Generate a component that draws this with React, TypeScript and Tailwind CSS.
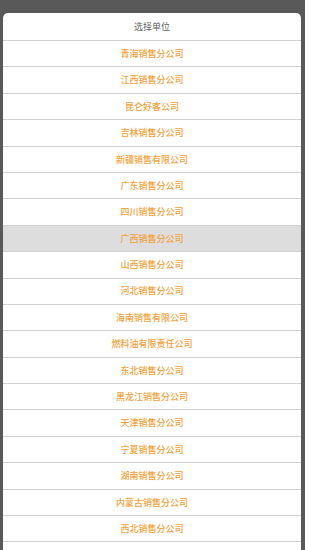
const units = [
  "青海销售分公司",
  "江西销售分公司",
  "昆仑好客公司",
  "吉林销售分公司",
  "新疆销售有限公司",
  "广东销售分公司",
  "四川销售分公司",
  "广西销售分公司",
  "山西销售分公司",
  "河北销售分公司",
  "海南销售有限公司",
  "燃料油有限责任公司",
  "东北销售分公司",
  "黑龙江销售分公司",
  "天津销售分公司",
  "宁夏销售分公司",
  "湖南销售分公司",
  "内蒙古销售分公司",
  "西北销售分公司",
]

export default function App() {
  const active = 7

  return (
    <div
      className="h-[550px] w-[305px] overflow-hidden bg-[#595959] pt-[13px]"
      style={{ fontFamily: '"Noto Sans CJK SC", "Noto Sans", sans-serif' }}
    >
      <div className="ml-[3px] w-[298px] overflow-hidden rounded-t-[5px] bg-white">
        {/* Title */}
        <div className="flex h-[28px] items-center justify-center border-b border-[#d0d0d0] text-[9px] text-[#5f5f5f]">
          选择单位
        </div>

        {/* Options */}
        {units.map((name, i) => (
          <div
            key={name}
            className={`flex h-[26.4px] items-center justify-center border-b border-[#d0d0d0] text-[9px] font-medium text-[#f3a23a] ${
              i === active ? "bg-[#dddddd]" : "bg-white"
            }`}
          >
            {name}
          </div>
        ))}
        <div className="h-[20px]" />
      </div>
    </div>
  )
}
